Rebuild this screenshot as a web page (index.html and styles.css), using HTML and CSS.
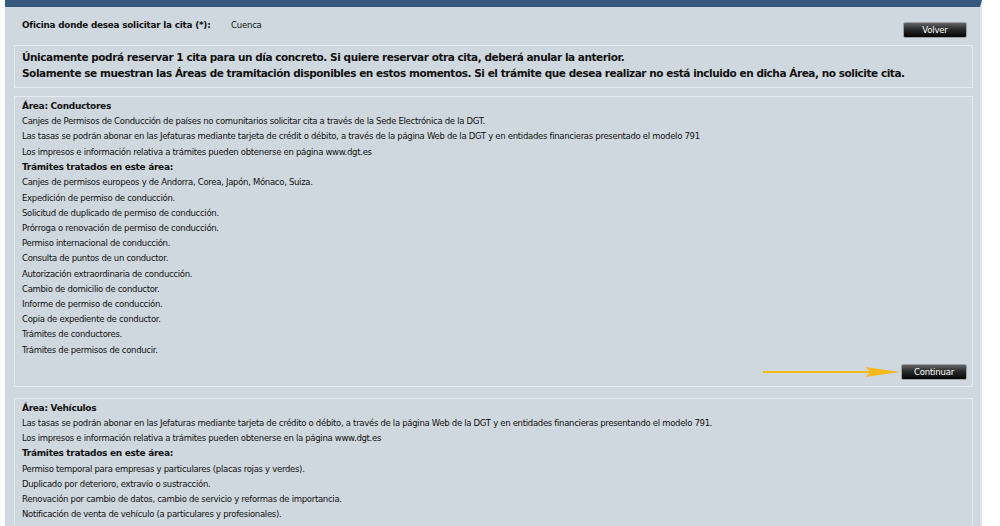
FILE: index.html
```html
<!DOCTYPE html>
<html lang="es">
  <head>
    <meta charset="UTF-8" />
    <meta name="viewport" content="width=device-width, initial-scale=1.0" />
    <title>Cita previa - Selección de área</title>
    <link rel="stylesheet" href="styles.css">
  </head>
  <body>
    <div class="page">
      <div class="office-row">
        <span class="office-label">Oficina donde desea solicitar la cita (*):</span>
        <span class="office-value">Cuenca</span>
        <button class="btn btn-back">Volver</button>
      </div>

      <div class="box notice">
        <p>Únicamente podrá reservar 1 cita para un día concreto. Si quiere reservar otra cita, deberá anular la anterior.</p>
        <p>Solamente se muestran las Áreas de tramitación disponibles en estos momentos. Si el trámite que desea realizar no está incluido en dicha Área, no solicite cita.</p>
      </div>

      <div class="box area">
        <h2>Área: Conductores</h2>
        <p>Canjes de Permisos de Conducción de países no comunitarios solicitar cita a través de la Sede Electrónica de la DGT.</p>
        <p>Las tasas se podrán abonar en las Jefaturas mediante tarjeta de crédit o débito, a través de la página Web de la DGT y en entidades financieras presentado el modelo 791</p>
        <p>Los impresos e información relativa a trámites pueden obtenerse en página www.dgt.es</p>
        <h3>Trámites tratados en este área:</h3>
        <ul>
          <li>Canjes de permisos europeos y de Andorra, Corea, Japón, Mónaco, Suiza.</li>
          <li>Expedición de permiso de conducción.</li>
          <li>Solicitud de duplicado de permiso de conducción.</li>
          <li>Prórroga o renovación de permiso de conducción.</li>
          <li>Permiso internacional de conducción.</li>
          <li>Consulta de puntos de un conductor.</li>
          <li>Autorización extraordinaria de conducción.</li>
          <li>Cambio de domicilio de conductor.</li>
          <li>Informe de permiso de conducción.</li>
          <li>Copia de expediente de conductor.</li>
          <li>Trámites de conductores.</li>
          <li>Trámites de permisos de conducir.</li>
        </ul>
        <div class="actions">
          <svg class="arrow" width="138" height="12" viewBox="0 0 138 12">
            <line x1="0" y1="6" x2="110" y2="6" stroke="#f3b81c" stroke-width="2" />
            <path d="M102 1 L137 6 L102 11 L108 6 Z" fill="#f3b81c" />
          </svg>
          <button class="btn">Continuar</button>
        </div>
      </div>

      <div class="box area">
        <h2>Área: Vehículos</h2>
        <p>Las tasas se podrán abonar en las Jefaturas mediante tarjeta de crédito o débito, a través de la página Web de la DGT y en entidades financieras presentando el modelo 791.</p>
        <p>Los impresos e información relativa a trámites pueden obtenerse en la página www.dgt.es</p>
        <h3>Trámites tratados en este área:</h3>
        <ul>
          <li>Permiso temporal para empresas y particulares (placas rojas y verdes).</li>
          <li>Duplicado por deterioro, extravío o sustracción.</li>
          <li>Renovación por cambio de datos, cambio de servicio y reformas de importancia.</li>
          <li>Notificación de venta de vehículo (a particulares y profesionales).</li>
        </ul>
      </div>
    </div>
  </body>
</html>
```

FILE: styles.css
```css
* {
  box-sizing: border-box;
  margin: 0;
  padding: 0;
}

html,
body {
  height: 100%;
}

body {
  background: #fff;
  font-family: "DejaVu Sans", Verdana, sans-serif;
  color: #111;
  overflow: hidden;
}

.page {
  width: 977px;
  height: 100%;
  margin-left: 5px;
  overflow: hidden;
  background: #cfd8de;
  border-top: 7px solid #37597f;
  border-right: 2px solid #dde4e8;
  padding: 0 7px 0 9px;
}

.office-row {
  display: flex;
  align-items: flex-start;
  padding: 12px 0 0 8px;
  font-size: 8.5px;
  letter-spacing: -0.2px;
  line-height: 12px;
}

.office-label {
  font-weight: bold;
  font-size: 8.8px;
  width: 209px;
}

.btn {
  font-family: "DejaVu Sans", Verdana, sans-serif;
  font-size: 8.5px;
  letter-spacing: -0.2px;
  color: #fff;
  height: 16px;
  padding: 0 10px;
  border: 1px solid #9ba1a5;
  border-radius: 2px;
  background: linear-gradient(#606264, #2a2b2c 45%, #050505);
  cursor: pointer;
}

.btn-back {
  margin: 3px 6px 0 auto;
  width: 64px;
}

.box {
  border: 1px solid #e4eaed;
  padding: 3px 5px 6px 7px;
}

.notice {
  margin-top: 7px;
  font-size: 10.5px;
  letter-spacing: -0.45px;
  font-weight: bold;
  line-height: 16px;
}

.area {
  margin-top: 8px;
  font-size: 8.5px;
  letter-spacing: -0.3px;
  line-height: 15.2px;
  padding-top: 2px;
  padding-bottom: 6px;
}

.area + .area {
  margin-top: 11px;
}

.area h2,
.area h3 {
  font-size: 9px;
  letter-spacing: -0.3px;
  line-height: 15.2px;
}

.area h3 {
  line-height: 15.5px;
}

.area ul {
  list-style: none;
}

.actions {
  display: flex;
  justify-content: flex-end;
  align-items: center;
  position: relative;
  padding-top: 6px;
}

.actions .btn {
  width: 66px;
}

.arrow {
  position: absolute;
  right: 66px;
  top: 8px;
}
```
